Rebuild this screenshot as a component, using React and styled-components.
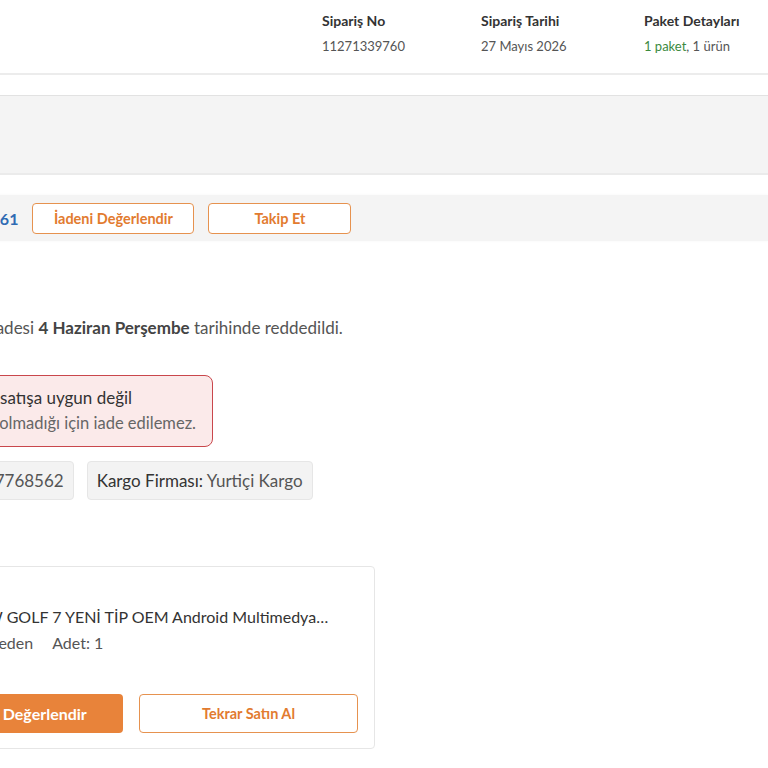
import React from 'react'
import styled, { createGlobalStyle } from 'styled-components'

const GlobalStyle = createGlobalStyle`
  body {
    margin: 0;
    background: #ffffff;
    font-family: Lato, "Open Sans", sans-serif;
    color: #333333;
    overflow: hidden;
  }
`

// the order page is wider than the window; its left column sits off-screen
const OFFSET = 300

const App = () => {
  return (
    <>
      <GlobalStyle />
      <Page>
        <OrderHeader>
          <HeaderTitle>Sipariş Detayı</HeaderTitle>
          <MetaGroup>
            <MetaCol $w={159}>
              <MetaLabel>Sipariş No</MetaLabel>
              <MetaValue>11271339760</MetaValue>
            </MetaCol>
            <MetaCol $w={163}>
              <MetaLabel>Sipariş Tarihi</MetaLabel>
              <MetaValue>27 Mayıs 2026</MetaValue>
            </MetaCol>
            <MetaCol $w={124}>
              <MetaLabel>Paket Detayları</MetaLabel>
              <MetaValue><Green>1 paket</Green>, 1 ürün</MetaValue>
            </MetaCol>
          </MetaGroup>
        </OrderHeader>
        <BlankRow />
        <StatusStrip />

        <PackageBar>
          <TrackText>Kargo Takip No: <TrackLink>7250007768561</TrackLink></TrackText>
          <OutlineButton $w={162}>İadeni Değerlendir</OutlineButton>
          <OutlineButton $w={143}>Takip Et</OutlineButton>
        </PackageBar>

        <PackageBody>
          <StatusText>Son ürünün iadesi <b>4 Haziran Perşembe</b> tarihinde reddedildi.</StatusText>
          <Alert>
            <AlertTitle>Ürün tekrar satışa uygun değil</AlertTitle>
            <AlertText>Ürün uygun olmadığı için iade edilemez.</AlertText>
          </Alert>
          <ChipRow>
            <Chip>İade Kodu: <span>7768562</span></Chip>
            <Chip>Kargo Firması: <span>Yurtiçi Kargo</span></Chip>
          </ChipRow>

          <ProductCard>
            <ProductRow>
              <Thumb />
              <ProductInfo>
                <ProductName>İç VW GOLF 7 YENİ TİP OEM Android Multimedya Navigasyon Sistemi</ProductName>
                <ProductMeta>
                  <span>Tek Beden</span>
                  <span>Adet: 1</span>
                </ProductMeta>
              </ProductInfo>
            </ProductRow>
            <ButtonRow>
              <FilledButton>Ürünü Değerlendir</FilledButton>
              <WideOutline>Tekrar Satın Al</WideOutline>
            </ButtonRow>
          </ProductCard>
        </PackageBody>
      </Page>
    </>
  )
}

export default App

const Page = styled.div`
  margin-left: -${OFFSET}px;
  width: calc(100vw + ${OFFSET}px);
  min-height: 768px;
`
const OrderHeader = styled.header`
  display: flex;
  justify-content: space-between;
  height: 75px;
  box-sizing: border-box;
  padding: 12px 0 0 24px;
  border-bottom: 2px solid #ececec;
`
const HeaderTitle = styled.h2`
  margin: 0;
  font-size: 18px;
  color: #333;
`
const MetaGroup = styled.div`
  display: flex;
`
const MetaCol = styled.div`
  display: flex;
  flex-direction: column;
  gap: 7px;
  width: ${p => p.$w}px;
`
const MetaLabel = styled.span`
  font-size: 14px;
  line-height: 18px;
  font-weight: 700;
  color: #333;
`
const MetaValue = styled.span`
  font-size: 13px;
  line-height: 18px;
  color: #555;
`
const Green = styled.span`
  color: #3b8a3e;
`
const BlankRow = styled.div`
  height: 20px;
  border-bottom: 1px solid #e2e2e2;
`
const StatusStrip = styled.div`
  height: 77px;
  background: #f4f4f4;
  border-bottom: 2px solid #ebebeb;
`
const PackageBar = styled.div`
  display: flex;
  align-items: center;
  gap: 14px;
  height: 46px;
  margin-top: 20px;
  padding-left: 83px;
  background: #f4f4f4;
  box-shadow: 0 0 3px rgba(0, 0, 0, 0.04);
`
const TrackText = styled.span`
  font-size: 16px;
  color: #333;
  white-space: nowrap;
`
const TrackLink = styled.span`
  color: #2f6bb3;
  font-weight: 700;
`
const OutlineButton = styled.button`
  width: ${p => p.$w}px;
  height: 31px;
  padding: 0;
  border: 1px solid #e6924f;
  border-radius: 4px;
  background: #fff;
  color: #e27b2f;
  font-family: inherit;
  font-size: 14.5px;
  font-weight: 700;
  cursor: pointer;
`
const PackageBody = styled.div`
  display: flex;
  flex-direction: column;
  align-items: flex-start;
  padding-left: 201px;
  padding-top: 77px;
`
const StatusText = styled.p`
  margin: 0;
  font-size: 17px;
  line-height: 20px;
  color: #555;
  white-space: nowrap;
  b {
    color: #444;
    font-weight: 700;
  }
`
const Alert = styled.div`
  margin-top: 37px;
  padding: 10px 16px 10px 8px;
  border: 1px solid #c9474c;
  border-radius: 8px;
  background: #fbeaea;
  white-space: nowrap;
`
const AlertTitle = styled.div`
  font-size: 17px;
  line-height: 24px;
  color: #333;
`
const AlertText = styled.div`
  font-size: 16.5px;
  line-height: 26px;
  color: #666;
`
const ChipRow = styled.div`
  display: flex;
  gap: 13px;
  margin-top: 14px;
`
const Chip = styled.div`
  padding: 9px;
  font-size: 17px;
  line-height: 19px;
  color: #333;
  background: #f3f3f3;
  border: 1px solid #e6e6e6;
  border-radius: 4px;
  white-space: nowrap;
  span {
    color: #555;
  }
`
const ProductCard = styled.div`
  margin-top: 66px;
  width: 474px;
  box-sizing: border-box;
  padding: 40px 16px 15px 16px;
  border: 1px solid #e6e6e6;
  border-radius: 4px;
  background: #fff;
`
const ProductRow = styled.div`
  display: flex;
  gap: 12px;
`
const Thumb = styled.div`
  flex: 0 0 30px;
  height: 46px;
  background: #fff;
`
const ProductInfo = styled.div`
  display: flex;
  flex-direction: column;
  gap: 6px;
  min-width: 0;
  max-width: 370px;
`
const ProductName = styled.div`
  font-size: 16px;
  line-height: 20px;
  color: #333;
  white-space: nowrap;
  overflow: hidden;
  text-overflow: ellipsis;
`
const ProductMeta = styled.div`
  display: flex;
  gap: 19px;
  font-size: 16px;
  line-height: 20px;
  color: #555;
`
const ButtonRow = styled.div`
  display: flex;
  gap: 16px;
  margin-top: 41px;
`
const FilledButton = styled.button`
  flex: 1;
  height: 39px;
  border: none;
  border-radius: 4px;
  background: #e8833a;
  color: #fff;
  font-family: inherit;
  font-size: 16px;
  font-weight: 700;
`
const WideOutline = styled.button`
  flex: 0 0 219px;
  height: 39px;
  border: 1px solid #e6924f;
  border-radius: 4px;
  background: #fff;
  color: #e27b2f;
  font-family: inherit;
  font-size: 14.5px;
  font-weight: 700;
`
